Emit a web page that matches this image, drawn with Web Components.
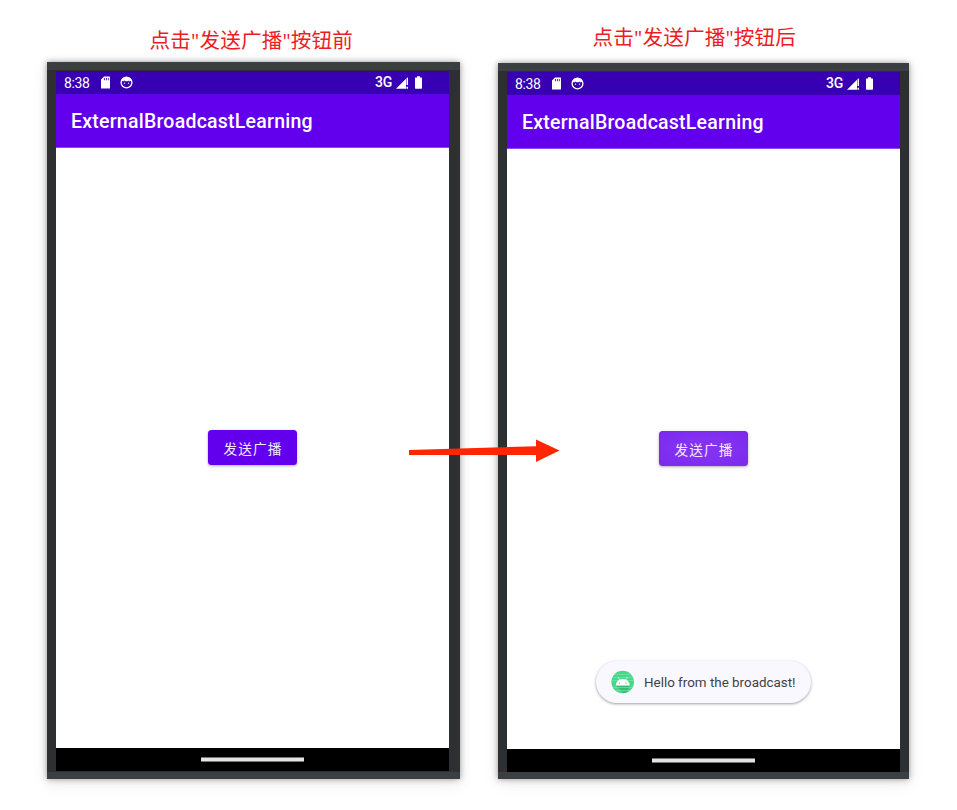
<!DOCTYPE html>
<html lang="zh-CN">
<head>
<meta charset="utf-8">
<title>ExternalBroadcastLearning</title>
<style>
html, body { margin: 0; background: #fff; }
</style>
</head>
<body>
<broadcast-demo></broadcast-demo>

<template id="t-demo">
<style>
:host { display: block; position: relative; width: 957px; height: 810px; overflow: hidden; background: #fff; }
main { display: flex; gap: 38px; padding-left: 47px; align-items: flex-start; }
section { display: flex; flex-direction: column; }
.a { width: 413px; }
.b { width: 411px; }
flow-arrow { position: absolute; left: 408px; top: 438px; }
</style>
<main>
<section class="a">
<step-caption style="--h:62px;--pt:24px;--pl:102.5px">点击<q-mark>"</q-mark>发送广播<q-mark>"</q-mark>按钮前</step-caption>
<phone-frame style="--h:717px;--right:11px">
<action-button>发送广播</action-button>
</phone-frame>
</section>
<section class="b">
<step-caption style="--h:63px;--pt:21px;--pl:94.5px">点击<q-mark>"</q-mark>发送广播<q-mark>"</q-mark>按钮后</step-caption>
<phone-frame style="--h:716px;--right:9px">
<action-button pressed>发送广播</action-button>
<toast-message slot="toast">Hello from the broadcast!</toast-message>
</phone-frame>
</section>
</main>
<flow-arrow></flow-arrow>
</template>

<template id="t-caption">
<style>
:host { display: block; box-sizing: border-box; height: var(--h); padding: var(--pt) 0 0 var(--pl);
 font: 20.6px/31px "Noto Sans CJK SC", sans-serif; letter-spacing: .16px; color: #ed1c24; white-space: nowrap; }
</style>
<slot></slot>
</template>

<template id="t-quote"><style>:host { font-family: "Open Sans", sans-serif; }</style><slot></slot></template>

<template id="t-phone">
<style>
:host { display: flex; flex-direction: column; box-sizing: border-box; height: var(--h);
 padding: 9px var(--right) 0 9px; background: linear-gradient(#3c3f41 8px, transparent 8px, transparent calc(100% - 7px), #3c3f41 calc(100% - 7px)), #2e2f31;
 box-shadow: 0 0 6px rgba(0,0,0,.38), 0 4px 14px rgba(60,30,10,.10); }
.content { position: relative; display: flex; justify-content: center; height: 600px; background: #fff; }
.content > .body { padding-top: 282px; }
.toast { position: absolute; left: 89px; top: 512px; }
</style>
<status-bar></status-bar>
<app-bar>ExternalBroadcastLearning</app-bar>
<div class="content">
<div class="body"><slot></slot></div>
<div class="toast"><slot name="toast"></slot></div>
</div>
<nav-bar></nav-bar>
</template>

<template id="t-status">
<style>
:host { display: flex; align-items: center; height: 23px; box-sizing: border-box; padding: 0 27px 0 8px; background: #3700b3; color: #fff;
 font: 14px/23px Roboto, sans-serif; }
svg { display: block; fill: currentColor; }
.time { width: 37px; letter-spacing: -.35px; padding-top: 1px; }
.sp { flex: 1; }
.net { font-weight: 500; font-size: 14px; margin-right: 4px; letter-spacing: -.2px; }
</style>
<span class="time">8:38</span>
<svg width="9" height="13" viewBox="0 0 9 13"><path fill-rule="evenodd" d="M3 .5H8.4Q9 .5 9 1.1V12Q9 12.6 8.4 12.6H.6Q0 12.6 0 12V3.5ZM2.9 2.1V4.2H3.8V2.1ZM4.9 2.1V4.2H5.8V2.1ZM6.9 2.1V4.2H7.7V2.1Z"/></svg>
<svg style="margin-left:10px" width="13" height="13" viewBox="0 0 13 13"><circle cx="6.5" cy="6.5" r="5.4" fill="none" stroke="currentColor" stroke-width="1.3"/><path d="M1.2 4.6Q2.6 1 6.5 1T11.8 4.6L10.2 5.2H8.9L8.2 4.5 7.5 5.2H5.4L4.5 4.6 3.8 5.2H2.6Z"/><circle cx="4.5" cy="7.2" r=".65"/><circle cx="8.5" cy="7.2" r=".65"/></svg>
<span class="sp"></span>
<span class="net">3G</span>
<svg width="12" height="12" viewBox="0 0 12 12"><path d="M0 11.7 10 1.7V11.7ZM10.5 1.3 12 .2V8H10.5ZM10.5 9.7H12V11.7H10.5Z"/></svg>
<svg style="margin-left:7px" width="7" height="13" viewBox="0 0 7 13"><path d="M2 .3H5V1.6H6.4Q7 1.6 7 2.2V12.1Q7 12.7 6.4 12.7H.6Q0 12.7 0 12.1V2.2Q0 1.6 .6 1.6H2Z"/></svg>
</template>

<template id="t-appbar">
<style>
:host { display: block; height: 54px; box-sizing: border-box; padding-left: 15px; background: linear-gradient(#6200ee 53px, #9148f2 53px); color: #fff;
 font: 500 19.5px/56px Roboto, sans-serif; letter-spacing: .24px; white-space: nowrap; }
</style>
<slot></slot>
</template>

<template id="t-button">
<style>
:host { display: block; }
button { display: block; box-sizing: border-box; width: 89px; height: 35px; margin: 0; padding: 0 0 0 1px; border: 0; border-radius: 3.5px; background: #6200ee; color: #f3eafe;
 font: 400 13.7px/36px "Noto Sans CJK SC", sans-serif; letter-spacing: 1.1px; white-space: nowrap; box-shadow: 0 1px 3px rgba(0,0,0,.32); }
:host([pressed]) button { background: radial-gradient(ellipse, #8432f2 35%, #7929ee 100%); }
</style>
<button><slot></slot></button>
</template>

<template id="t-toast">
<style>
:host { display: flex; align-items: center; box-sizing: border-box; width: 215px; height: 42px; padding-left: 15px; gap: 9px; border-radius: 21px; background: #faf8ff; color: #404047;
 font: 13.4px/20px Roboto, sans-serif; white-space: nowrap; box-shadow: 0 1px 3px rgba(0,0,0,.38); }
span { padding-top: 2px; }
</style>
<svg width="24" height="24" viewBox="0 0 24 24"><defs><clipPath id="c"><circle cx="11.7" cy="12" r="11.3"/></clipPath></defs>
<g clip-path="url(#c)"><path fill="#45d889" d="M0 0H24V24H0Z"/><path fill="#32ad68" opacity=".65" d="M5 15.5H19L16 22 13.5 24Z"/><path stroke="#82e6b0" stroke-width=".6" d="M0 4.5H24M0 7.5H24M0 10.5H24M0 17.5H24M0 20.5H24"/></g>
<path fill="#fff" d="M4.8 15.5Q5.6 9 11.8 9T18.8 15.5Z"/><path stroke="#fff" stroke-width=".6" d="M7.2 7.2 8.8 10M16.4 7.2 14.8 10"/><circle cx="8.7" cy="13" r=".6" fill="#32945f"/><circle cx="14.9" cy="13" r=".6" fill="#32945f"/></svg>
<span><slot></slot></span>
</template>

<template id="t-nav">
<style>
:host { display: flex; justify-content: center; align-items: flex-start; box-sizing: border-box; height: 23px; padding-top: 9px; background: #000; }
i { box-sizing: border-box; width: 103px; height: 5px; border: solid #77777a; border-width: 1px 0; border-radius: 1px; background: #e4e4e4; }
</style>
<i></i>
</template>

<template id="t-arrow">
<style>:host { display: block; width: 152px; height: 26px; } svg { display: block; }</style>
<svg width="152" height="26" viewBox="0 0 152 26"><path fill="#ff2600" d="M1 12 128 8.3V1.5L151.5 12.5 128 24V17L1 17Z"/></svg>
</template>

<script>
for (const [tag, id] of [
 ['q-mark', 't-quote'], ['status-bar', 't-status'], ['app-bar', 't-appbar'], ['nav-bar', 't-nav'],
 ['action-button', 't-button'], ['toast-message', 't-toast'], ['step-caption', 't-caption'],
 ['phone-frame', 't-phone'], ['flow-arrow', 't-arrow'], ['broadcast-demo', 't-demo']
]) {
 customElements.define(tag, class extends HTMLElement {
  constructor() {
   super();
   this.attachShadow({ mode: 'open' }).append(document.getElementById(id).content.cloneNode(true));
  }
 });
}
</script>
</body>
</html>
